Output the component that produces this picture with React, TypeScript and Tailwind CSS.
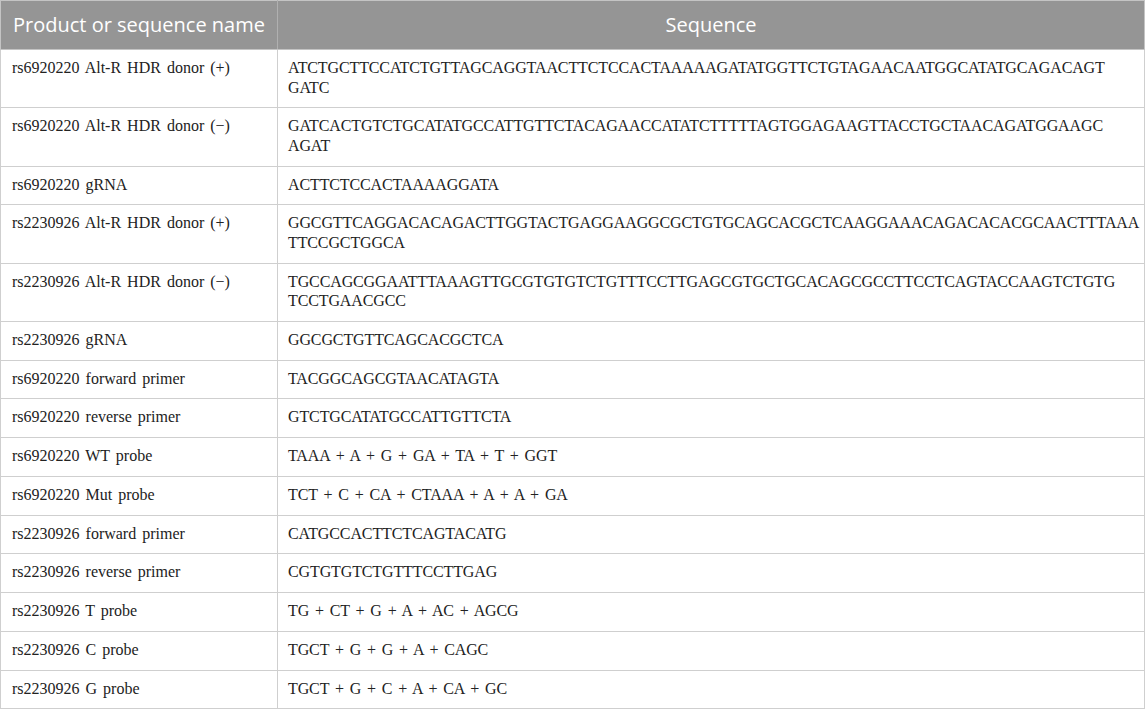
const rows: { name: string; seq: string[] }[] = [
  {
    name: "rs6920220 Alt-R HDR donor (+)",
    seq: ["ATCTGCTTCCATCTGTTAGCAGGTAACTTCTCCACTAAAAAGATATGGTTCTGTAGAACAATGGCATATGCAGACAGT", "GATC"],
  },
  {
    name: "rs6920220 Alt-R HDR donor (\u2212)",
    seq: ["GATCACTGTCTGCATATGCCATTGTTCTACAGAACCATATCTTTTTAGTGGAGAAGTTACCTGCTAACAGATGGAAGC", "AGAT"],
  },
  { name: "rs6920220 gRNA", seq: ["ACTTCTCCACTAAAAGGATA"] },
  {
    name: "rs2230926 Alt-R HDR donor (+)",
    seq: ["GGCGTTCAGGACACAGACTTGGTACTGAGGAAGGCGCTGTGCAGCACGCTCAAGGAAACAGACACACGCAACTTTAAA", "TTCCGCTGGCA"],
  },
  {
    name: "rs2230926 Alt-R HDR donor (\u2212)",
    seq: ["TGCCAGCGGAATTTAAAGTTGCGTGTGTCTGTTTCCTTGAGCGTGCTGCACAGCGCCTTCCTCAGTACCAAGTCTGTG", "TCCTGAACGCC"],
  },
  { name: "rs2230926 gRNA", seq: ["GGCGCTGTTCAGCACGCTCA"] },
  { name: "rs6920220 forward primer", seq: ["TACGGCAGCGTAACATAGTA"] },
  { name: "rs6920220 reverse primer", seq: ["GTCTGCATATGCCATTGTTCTA"] },
  { name: "rs6920220 WT probe", seq: ["TAAA + A + G + GA + TA + T + GGT"] },
  { name: "rs6920220 Mut probe", seq: ["TCT + C + CA + CTAAA + A + A + GA"] },
  { name: "rs2230926 forward primer", seq: ["CATGCCACTTCTCAGTACATG"] },
  { name: "rs2230926 reverse primer", seq: ["CGTGTGTCTGTTTCCTTGAG"] },
  { name: "rs2230926 T probe", seq: ["TG + CT + G + A + AC + AGCG"] },
  { name: "rs2230926 C probe", seq: ["TGCT + G + G + A + CAGC"] },
  { name: "rs2230926 G probe", seq: ["TGCT + G + C + A + CA + GC"] },
]

export default function App() {
  return (
    <div className="w-[1145px] bg-white">
      <table className="w-full border-collapse table-fixed">
        <colgroup>
          <col className="w-[277px]" />
          <col />
        </colgroup>
        <thead>
          <tr className="bg-[#959595] text-white font-['Open_Sans',sans-serif] text-[20px] font-normal">
            <th className="h-[49px] border border-[#c4c4c4] border-r-[#b0b0b0] px-[10px] font-normal text-center">
              Product or sequence name
            </th>
            <th className="h-[49px] border border-[#c4c4c4] px-[11px] font-normal text-center">Sequence</th>
          </tr>
        </thead>
        <tbody className="font-['Liberation_Serif',serif] text-[16px] leading-[19.5px] [word-spacing:2px] text-[#222222]">
          {rows.map((row) => (
            <tr key={row.name + row.seq[0]}>
              <td className="border border-[#cfcfcf] pl-[11px] pr-2 pt-[8px] pb-[10.25px] align-top">{row.name}</td>
              <td className="border border-[#cfcfcf] pl-[10px] pr-0 pt-[8px] pb-[10.25px] align-top tracking-[-0.12px] whitespace-nowrap">
                {row.seq.map((line) => (
                  <div key={line}>{line}</div>
                ))}
              </td>
            </tr>
          ))}
        </tbody>
      </table>
    </div>
  )
}
